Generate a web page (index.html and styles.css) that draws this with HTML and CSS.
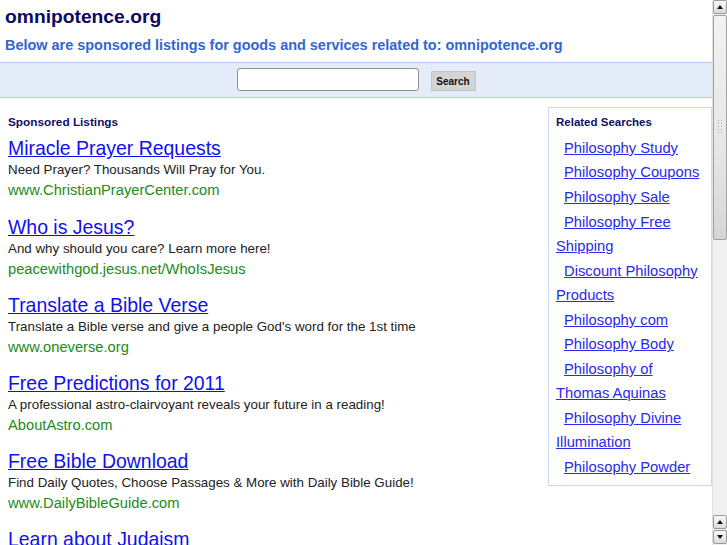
FILE: index.html
```html
<!DOCTYPE html>
<html>
<head>
<meta charset="utf-8">
<title>omnipotence.org</title>
<link rel="stylesheet" href="styles.css">
</head>
<body>
<div class="page">
  <header class="head">
    <h1 class="domain">omnipotence.org</h1>
    <p class="tagline">Below are sponsored listings for goods and services related to: omnipotence.org</p>
  </header>
  <form class="searchbar">
    <input class="q" type="text">
    <button class="go" type="button">Search</button>
  </form>
  <div class="content">
    <div class="ads">
      <h2 class="label">Sponsored Listings</h2>
      <div class="ad">
        <a class="ad-title" href="#">Miracle Prayer Requests</a>
        <div class="ad-desc">Need Prayer? Thousands Will Pray for You.</div>
        <div class="ad-url">www.ChristianPrayerCenter.com</div>
      </div>
      <div class="ad">
        <a class="ad-title" href="#">Who is Jesus?</a>
        <div class="ad-desc">And why should you care? Learn more here!</div>
        <div class="ad-url">peacewithgod.jesus.net/WhoIsJesus</div>
      </div>
      <div class="ad">
        <a class="ad-title" href="#">Translate a Bible Verse</a>
        <div class="ad-desc">Translate a Bible verse and give a people God's word for the 1st time</div>
        <div class="ad-url">www.oneverse.org</div>
      </div>
      <div class="ad">
        <a class="ad-title" href="#">Free Predictions for 2011</a>
        <div class="ad-desc">A professional astro-clairvoyant reveals your future in a reading!</div>
        <div class="ad-url">AboutAstro.com</div>
      </div>
      <div class="ad">
        <a class="ad-title" href="#">Free Bible Download</a>
        <div class="ad-desc">Find Daily Quotes, Choose Passages &amp; More with Daily Bible Guide!</div>
        <div class="ad-url">www.DailyBibleGuide.com</div>
      </div>
      <div class="ad">
        <a class="ad-title" href="#">Learn about Judaism</a>
      </div>
    </div>
    <aside class="related">
      <h2 class="label">Related Searches</h2>
      <p class="rel"><a href="#">Philosophy Study</a></p>
      <p class="rel"><a href="#">Philosophy Coupons</a></p>
      <p class="rel"><a href="#">Philosophy Sale</a></p>
      <p class="rel"><a href="#">Philosophy Free Shipping</a></p>
      <p class="rel"><a href="#">Discount Philosophy Products</a></p>
      <p class="rel"><a href="#">Philosophy com</a></p>
      <p class="rel"><a href="#">Philosophy Body</a></p>
      <p class="rel"><a href="#">Philosophy of Thomas Aquinas</a></p>
      <p class="rel"><a href="#">Philosophy Divine Illumination</a></p>
      <p class="rel"><a href="#">Philosophy Powder</a></p>
    </aside>
  </div>
</div>
<div class="scrollbar">
  <div class="sb-btn sb-up"></div>
  <div class="sb-thumb"><span class="sb-grip"></span></div>
  <div class="sb-track"></div>
  <div class="sb-btn sb-up"></div>
  <div class="sb-btn sb-down"></div>
</div>
</body>
</html>
```

FILE: styles.css
```css
html, body {
  margin: 0;
  padding: 0;
}
body {
  width: 727px;
  height: 545px;
  overflow: hidden;
  background: #fff;
  font-family: "Liberation Sans", Arial, Helvetica, sans-serif;
  position: relative;
}
.page {
  width: 712px;
}
.head {
  padding: 5px 0 0 5px;
}
.domain {
  margin: 0;
  font-size: 19.25px;
  line-height: 24px;
  font-weight: bold;
  color: #0a0a5e;
}
.tagline {
  margin: 7px 0 8px;
  font-size: 14.45px;
  line-height: 18px;
  font-weight: bold;
  color: #3366cc;
}
.searchbar {
  margin: 0;
  height: 34px;
  background: #e5ecf9;
  border-top: 1px solid #b5caf0;
  border-bottom: 1px solid #b5caf0;
  display: flex;
  justify-content: center;
  align-items: flex-start;
  gap: 12px;
}
.q {
  margin: 5px 0 0;
  box-sizing: border-box;
  width: 182px;
  height: 23px;
  border: 1px solid #8e8e8e;
  border-radius: 3px;
  background: #fff;
  padding: 0 3px;
}
.go {
  margin: 8px 0 0;
  box-sizing: border-box;
  width: 45px;
  height: 20px;
  padding: 0;
  border: 1px solid #c4c4c4;
  border-radius: 0;
  background: #d4d4d4;
  font-family: "Liberation Sans", Arial, sans-serif;
  font-size: 10px;
  font-weight: bold;
  color: #111;
}
.content {
  display: flex;
  align-items: flex-start;
}
.ads {
  flex: 1;
  padding: 17px 0 0 8px;
}
.label {
  margin: 0;
  font-size: 11.5px;
  line-height: 14px;
  font-weight: bold;
  color: #101060;
}
.ads .label {
  font-size: 11.8px;
  margin-bottom: 7.4px;
}
.ad {
  margin-bottom: 14.2px;
}
.ad-title {
  display: block;
  font-size: 19.45px;
  line-height: 24px;
  color: #1010ee;
  text-decoration: underline;
  width: max-content;
}
.ad-desc {
  font-size: 13.35px;
  line-height: 20px;
  color: #222;
}
.ad-url {
  font-size: 14.7px;
  line-height: 20px;
  color: #228b22;
}
.related {
  margin-top: 9px;
  box-sizing: border-box;
  width: 164px;
  border: 1px solid #cbd9f4;
  padding: 7px 7px 5px 7px;
}
.related .label {
  margin-bottom: 6.9px;
}
.rel {
  margin: 0;
  text-indent: 8px;
  font-size: 14.75px;
  line-height: 24.54px;
}
.rel a {
  color: #2a2aea;
  text-decoration: underline;
}

/* faux window scrollbar overlaying the right edge */
.scrollbar {
  position: absolute;
  top: 0;
  right: 0;
  width: 15px;
  height: 545px;
  display: flex;
  flex-direction: column;
  background-color: #f0f0f0;
  background-image: radial-gradient(#dcdcdc 0.6px, transparent 0.7px);
  background-size: 2px 2px;
  border-left: 1px solid #e2e2e2;
  box-sizing: border-box;
}
.sb-btn {
  height: 14px;
  flex: none;
  box-sizing: border-box;
  margin: 0 0 1px 0;
  border: 1px solid #9a9a9a;
  border-radius: 2px;
  background: linear-gradient(#fafafa, #dadada);
  position: relative;
}
.sb-btn::after {
  content: "";
  position: absolute;
  left: 3px;
  top: 4px;
  border-left: 3.5px solid transparent;
  border-right: 3.5px solid transparent;
}
.sb-up::after {
  border-bottom: 4px solid #111;
}
.sb-down::after {
  border-top: 4px solid #111;
}
.sb-thumb {
  height: 225px;
  flex: none;
  box-sizing: border-box;
  border: 1px solid #a0a0a0;
  border-radius: 2px;
  background: linear-gradient(#f2f2f2, #e6e6e6 60%, #d6d6d6);
  position: relative;
}
.sb-grip {
  position: absolute;
  left: 3px;
  top: 103px;
  width: 7px;
  height: 16px;
  background-image: radial-gradient(#b4b4b4 0.7px, transparent 0.8px);
  background-size: 3px 3px;
}
.sb-track {
  flex: 1;
}
```
